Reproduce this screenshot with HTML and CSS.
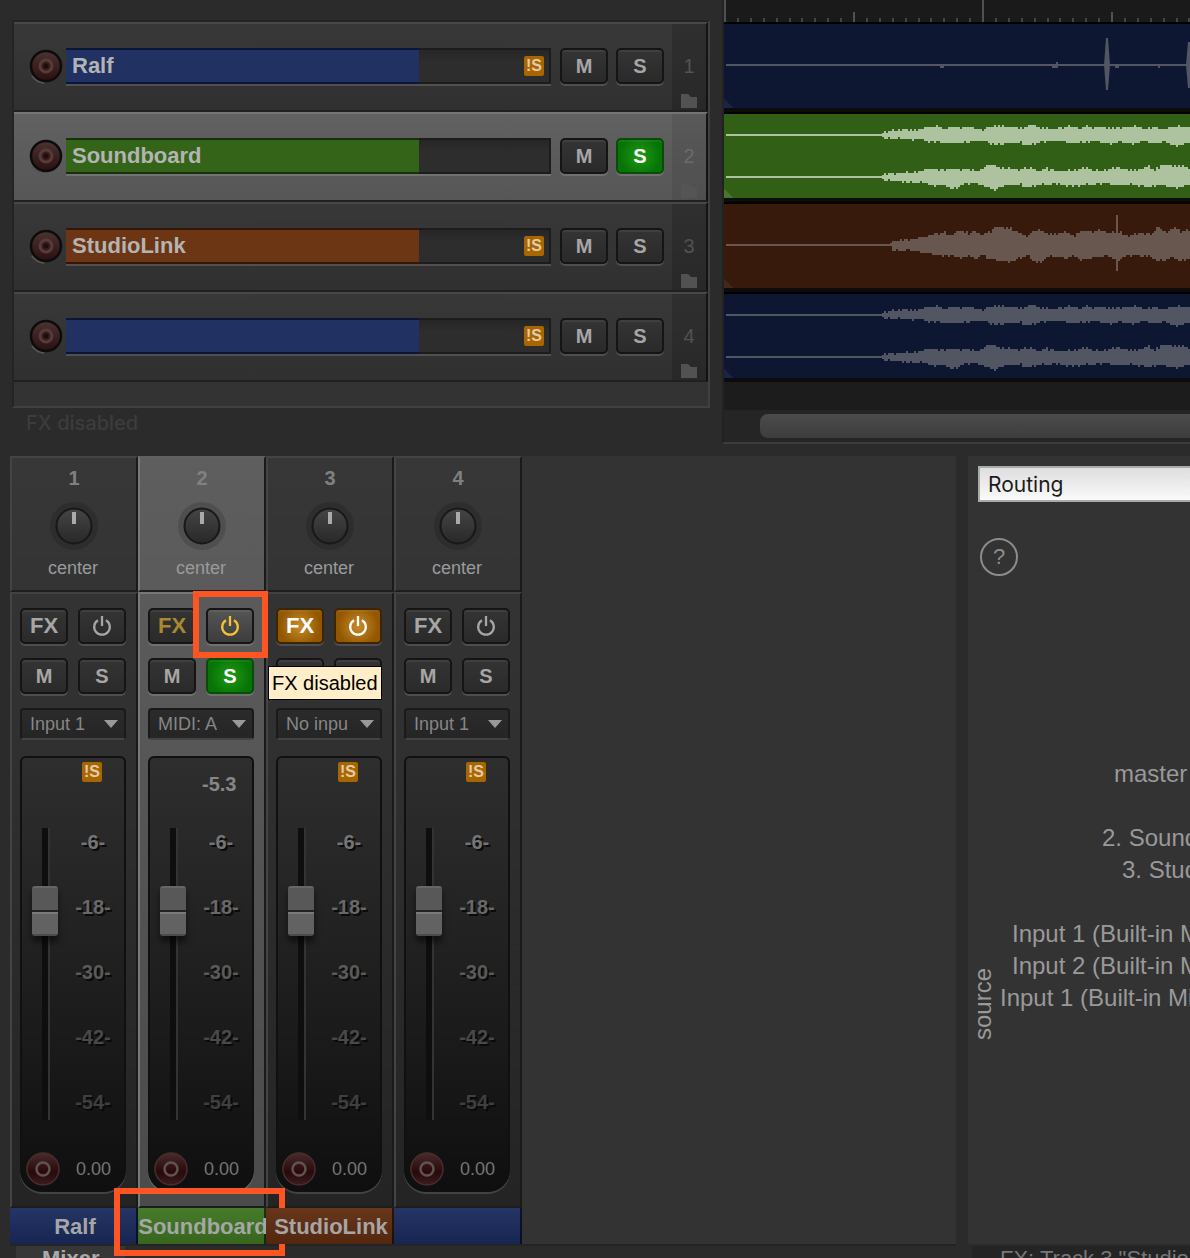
FILE: index.html
```
<!DOCTYPE html>
<html lang="en">
<head>
<meta charset="utf-8">
<title>Mixer</title>
<link rel="stylesheet" href="styles.css">
</head>
<body>
<svg class="defs" aria-hidden="true">
  <defs>
    <linearGradient id="rec-red" x1="0" y1="0" x2="0" y2="1"><stop offset="0" stop-color="#4d3232"/><stop offset="1" stop-color="#2c1010"/></linearGradient>
    <linearGradient id="rec-deep" x1="0" y1="0" x2="0" y2="1"><stop offset="0" stop-color="#4a2a2a"/><stop offset="0.6" stop-color="#280a0c"/><stop offset="1" stop-color="#3c1c1e"/></linearGradient>
    <linearGradient id="knob-face" x1="0" y1="0" x2="0" y2="1"><stop offset="0" stop-color="#454545"/><stop offset="1" stop-color="#282828"/></linearGradient>
  </defs>
  <symbol id="arm" viewBox="0 0 36 36">
    <path d="M4 28a17 17 0 0 0 12 7" fill="none" stroke="#555" stroke-width="2"/>
    <circle cx="18" cy="18" r="15" fill="url(#rec-red)" stroke="#0c0c0c" stroke-width="2.5"/>
    <circle cx="18" cy="18" r="6" fill="#3a1c1c" stroke="#553c3c" stroke-width="3"/>
    <circle cx="18" cy="18" r="2.5" fill="#200c0c"/>
  </symbol>
  <symbol id="arm-strip" viewBox="0 0 34 34">
    <circle cx="17" cy="17" r="16" fill="url(#rec-deep)" stroke="#4a2c2c" stroke-width="1.5"/>
    <circle cx="17" cy="17" r="6.5" fill="none" stroke="#645050" stroke-width="2.5"/>
  </symbol>
  <symbol id="knob" viewBox="0 0 48 48">
    <circle cx="24" cy="24" r="24" fill="#000" opacity=".14"/>
    <circle cx="24" cy="24" r="17.5" fill="url(#knob-face)" stroke="#181818" stroke-width="2"/>
    <path d="M22 10h4v12h-4z" fill="#aaa"/>
  </symbol>
  <symbol id="power" viewBox="0 0 20 20">
    <path d="M6 4.2A7.8 7.8 0 1 0 14 4.2M10 0v10" fill="none" stroke="currentColor" stroke-width="2.3"/>
  </symbol>
  <symbol id="folder" viewBox="0 0 16 14"><path d="M0 0h7l3 3h6v11H0z" fill="currentColor"/></symbol>
</svg>

<div class="app">
  <div class="upper">
    <section class="left" aria-label="Tracks">
      <div class="tracks">
        <div class="track blue">
          <button class="arm" aria-label="Record arm"><svg><use href="#arm"/></svg></button>
          <div class="field"><input class="name" type="text" value="Ralf" aria-label="Track 1 name"><div class="rest"><span class="badge">!S</span></div></div>
          <button class="btn">M</button><button class="btn">S</button>
          <div class="index"><span>1</span><svg><use href="#folder"/></svg></div>
        </div>
        <div class="track green selected">
          <button class="arm" aria-label="Record arm"><svg><use href="#arm"/></svg></button>
          <div class="field"><input class="name" type="text" value="Soundboard" aria-label="Track 2 name"><div class="rest"></div></div>
          <button class="btn">M</button><button class="btn solo">S</button>
          <div class="index"><span>2</span><svg><use href="#folder"/></svg></div>
        </div>
        <div class="track brown">
          <button class="arm" aria-label="Record arm"><svg><use href="#arm"/></svg></button>
          <div class="field"><input class="name" type="text" value="StudioLink" aria-label="Track 3 name"><div class="rest"><span class="badge">!S</span></div></div>
          <button class="btn">M</button><button class="btn">S</button>
          <div class="index"><span>3</span><svg><use href="#folder"/></svg></div>
        </div>
        <div class="track blue">
          <button class="arm" aria-label="Record arm"><svg><use href="#arm"/></svg></button>
          <div class="field"><input class="name" type="text" value="" aria-label="Track 4 name"><div class="rest"><span class="badge">!S</span></div></div>
          <button class="btn">M</button><button class="btn">S</button>
          <div class="index"><span>4</span><svg><use href="#folder"/></svg></div>
        </div>
        <div class="tail"></div>
      </div>
      <p class="status">FX disabled</p>
    </section>

    <section class="arrange" aria-label="Arrangement">
      <svg class="ruler" id="ruler"></svg>
      <div class="item blue"><svg class="wave" data-wave="voice"></svg></div>
      <div class="item green"><svg class="wave" data-wave="stereo"></svg></div>
      <div class="item brown"><svg class="wave" data-wave="mono"></svg></div>
      <div class="item blue"><svg class="wave" data-wave="stereo"></svg></div>
      <div class="blank"></div>
      <div class="scroll"><div class="scroll-thumb"></div></div>
    </section>
  </div>

  <div class="lower">
    <section class="mixer" aria-label="Mixer">
      <div class="strip blue">
        <div class="head"><span class="num">1</span><svg class="knob"><use href="#knob"/></svg><span class="pan">center</span></div>
        <div class="body">
          <div class="pair"><button class="btn fx">FX</button><button class="btn" aria-label="FX power"><svg class="power"><use href="#power"/></svg></button></div>
          <div class="pair"><button class="btn">M</button><button class="btn">S</button></div>
          <label class="input"><select aria-label="Input"><option>Input 1</option></select></label>
          <div class="fader">
            <div class="peak"><span class="badge">!S</span></div>
            <div class="level"><input type="range" value="76" aria-label="Volume"><div class="scale"><span>-6-</span><span>-18-</span><span>-30-</span><span>-42-</span><span>-54-</span></div></div>
            <div class="foot"><button class="arm" aria-label="Record arm"><svg><use href="#arm-strip"/></svg></button><span>0.00</span></div>
          </div>
        </div>
        <div class="label">Ralf</div>
      </div>

      <div class="strip green selected">
        <div class="head"><span class="num">2</span><svg class="knob"><use href="#knob"/></svg><span class="pan">center</span></div>
        <div class="body">
          <div class="pair"><button class="btn fx dim">FX</button><span class="marked"><button class="btn lit" aria-label="FX power"><svg class="power"><use href="#power"/></svg></button><span class="marker power-marker"></span></span></div>
          <div class="pair"><button class="btn">M</button><button class="btn solo">S</button></div>
          <label class="input"><select aria-label="Input"><option>MIDI: A</option></select></label>
          <div class="fader">
            <div class="peak"><span class="reading">-5.3</span></div>
            <div class="level"><input type="range" value="76" aria-label="Volume"><div class="scale"><span>-6-</span><span>-18-</span><span>-30-</span><span>-42-</span><span>-54-</span></div></div>
            <div class="foot"><button class="arm" aria-label="Record arm"><svg><use href="#arm-strip"/></svg></button><span>0.00</span></div>
          </div>
        </div>
        <div class="label">Soundboard<span class="marker label-marker"></span></div>
      </div>

      <div class="strip brown">
        <div class="head"><span class="num">3</span><svg class="knob"><use href="#knob"/></svg><span class="pan">center</span></div>
        <div class="body">
          <div class="pair"><button class="btn fx on">FX</button><button class="btn on" aria-label="FX power"><svg class="power"><use href="#power"/></svg></button></div>
          <div class="pair"><button class="btn" aria-label="Mute"></button><button class="btn" aria-label="Solo"></button><span class="tooltip" role="tooltip">FX disabled</span></div>
          <label class="input"><select aria-label="Input"><option>No inpu</option></select></label>
          <div class="fader">
            <div class="peak"><span class="badge">!S</span></div>
            <div class="level"><input type="range" value="76" aria-label="Volume"><div class="scale"><span>-6-</span><span>-18-</span><span>-30-</span><span>-42-</span><span>-54-</span></div></div>
            <div class="foot"><button class="arm" aria-label="Record arm"><svg><use href="#arm-strip"/></svg></button><span>0.00</span></div>
          </div>
        </div>
        <div class="label">StudioLink</div>
      </div>

      <div class="strip blue">
        <div class="head"><span class="num">4</span><svg class="knob"><use href="#knob"/></svg><span class="pan">center</span></div>
        <div class="body">
          <div class="pair"><button class="btn fx">FX</button><button class="btn" aria-label="FX power"><svg class="power"><use href="#power"/></svg></button></div>
          <div class="pair"><button class="btn">M</button><button class="btn">S</button></div>
          <label class="input"><select aria-label="Input"><option>Input 1</option></select></label>
          <div class="fader">
            <div class="peak"><span class="badge">!S</span></div>
            <div class="level"><input type="range" value="76" aria-label="Volume"><div class="scale"><span>-6-</span><span>-18-</span><span>-30-</span><span>-42-</span><span>-54-</span></div></div>
            <div class="foot"><button class="arm" aria-label="Record arm"><svg><use href="#arm-strip"/></svg></button><span>0.00</span></div>
          </div>
        </div>
        <div class="label"></div>
      </div>
    </section>

    <section class="routing" aria-label="Routing">
      <select class="view" aria-label="View"><option>Routing</option></select>
      <button class="help" aria-label="Help">?</button>
      <div class="matrix">
        <div class="axis">source</div>
        <ul class="sources">
          <li class="in-4">master</li>
          <li class="gap in-3">2. Sound</li>
          <li class="in-5">3. Stud</li>
          <li class="gap in-2">Input 1 (Built-in M</li>
          <li class="in-2">Input 2 (Built-in M</li>
          <li class="in-1">Input 1 (Built-in Mi</li>
        </ul>
      </div>
    </section>
  </div>

  <nav class="tabs" aria-label="Docker tabs">
    <div class="tabset"><a class="tab current" href="#mixer">Mixer</a><a class="tab" href="#meter">Performance</a></div>
    <div class="tabset end"><a class="tab" href="#fx">FX: Track 3 "Studio</a></div>
  </nav>
</div>
<script src="script.js"></script>
</body>
</html>
```

FILE: styles.css
```
* { box-sizing: border-box; }

body {
  margin: 0;
  height: 100vh;
  overflow: hidden;
  background: #2b2b2b;
  font-family: "Liberation Sans", Arial, sans-serif;
  font-size: 18px;
  color: #999;
}

button, input, select { font: inherit; color: inherit; margin: 0; }
button { padding: 0; border: 0; background: none; }
.defs { position: absolute; width: 0; height: 0; }

.blue { --name: #203162; --label: #1a2a5c; --item: #0d1732; --wave: #525663; --fade: #1a2448; --edge: #0b1538; }
.green { --name: #346418; --label: #3d7420; --item: #305f15; --wave: #adc29e; --fade: #47742e; --edge: #17320a; }
.brown { --name: #6c3614; --label: #5e2c10; --item: #371a0b; --wave: #67574e; --fade: #42281a; --edge: #351503; }

/* Shared controls */
.btn {
  width: 48px;
  height: 36px;
  border: 2px solid #151515;
  border-radius: 5px;
  background: linear-gradient(#343434, #2a2a2a);
  box-shadow: 0 2px 0 rgba(255, 255, 255, .14), inset 0 2px 0 rgba(255, 255, 255, .06);
  color: #a6a6a6;
  font-size: 20px;
  font-weight: bold;
  line-height: 32px;
  text-align: center;
}
.btn.fx { font-size: 22px; }
.btn.solo { background: radial-gradient(circle, #229a16, #067406 75%); border-color: #0c4a0a; color: #fff; }
.btn.on { background: radial-gradient(circle, #c98c2a, #925700 75%); border-color: #3c2602; color: #fff; }
.btn.dim { color: #a88930; }
.btn.lit { background: linear-gradient(#555, #3d3d3d); color: #f5c233; }
.power { display: block; width: 20px; height: 20px; margin: 0 auto; }

.badge {
  width: 20px;
  height: 20px;
  border-radius: 2px;
  background: #a96600;
  color: #e0ccaa;
  font-size: 16px;
  font-weight: bold;
  line-height: 20px;
  text-align: center;
}

/* Track list and arrangement */
.upper { display: grid; grid-template-columns: 710fr 480fr; }
.left { padding: 20px 0 0 12px; }
.tracks {
  border: 2px solid #242424;
  border-right-color: #404040;
  border-bottom-color: #404040;
  background: #333;
}
.track {
  display: flex;
  align-items: center;
  height: 90px;
  padding: 0 0 2px 14px;
  border-top: 2px solid #484848;
  border-bottom: 2px solid #202020;
  border-right: 2px solid #131313;
  background: linear-gradient(#383838, #303030);
}
.track.selected { border-top-color: #747474; background: linear-gradient(#616161, #565656); }
.track .arm { width: 38px; height: 36px; }
.track .arm svg { display: block; width: 36px; height: 36px; }
.field {
  display: flex;
  flex: 1;
  height: 36px;
  margin-right: 9px;
  background: linear-gradient(#262626, #2d2d2d 12px);
  border: solid #1c1c1c;
  border-width: 2px 2px 2px 0;
  box-shadow: 0 2px 0 rgba(255, 255, 255, .15);
}
.name {
  flex: 353;
  min-width: 0;
  padding: 0 6px;
  border: 0;
  background: var(--name);
  box-shadow: 0 -2px 0 var(--edge), 0 2px 0 var(--edge);
  color: #b4b4b4;
  font-size: 22px;
  font-weight: bold;
}
.rest { display: flex; flex: 130; align-items: center; justify-content: flex-end; padding-right: 5px; }
.track .btn { margin-right: 8px; }
.index {
  display: flex;
  flex-direction: column;
  align-items: center;
  justify-content: space-between;
  align-self: flex-start;
  width: 34px;
  height: 86px;
  padding: 30px 0 2px;
  background: rgba(0, 0, 0, .15);
  color: #525252;
  font-size: 20px;
  line-height: 24px;
}
.selected .index { background: rgba(0, 0, 0, .08); color: #6b6b6b; }
.index svg { width: 16px; height: 14px; }
.selected .index svg { color: #555; }
.tail { height: 24px; }
.status { margin: 0; padding: 2px 14px 0; color: #3c3c3c; font: 500 20px/26px Inter, sans-serif; }

.arrange {
  margin-left: 12px;
  border-left: 2px solid #222;
  border-bottom: 2px solid #3d3d3d;
  background: #1c1c1c;
  overflow: hidden;
}
.ruler { display: block; width: 100%; height: 22px; background: #1a1a1a; }
.item { height: 90px; border-top: 2px solid #000; border-bottom: 4px solid #0c0c0c; background: linear-gradient(45deg, var(--fade) 7px, transparent 7px), var(--item); }
.wave { display: block; width: 100%; height: 84px; fill: var(--wave); }
.blank { height: 28px; }
.scroll { height: 32px; padding: 4px 0 4px 36px; background: #252525; }
.scroll-thumb { height: 24px; border-radius: 8px 0 0 8px; background: linear-gradient(#4b4b4b, #3d3d3d); }

/* Mixer */
.lower { display: grid; grid-template-columns: 946fr 222fr; column-gap: 12px; padding: 12px 0 0 10px; }
.mixer { display: flex; background: #333; border-bottom: 2px solid #242424; }
.strip {
  position: relative;
  width: 128px;
  background: linear-gradient(#373737, #232323);
}
.strip.selected { background: linear-gradient(#5e5e5e, #4a4a4a); }
.head, .body { border-left: 2px solid #444; border-right: 2px solid #1a1a1a; }
.selected .head, .selected .body { border-left-color: #7a7a7a; }
.head {
  display: flex;
  flex-direction: column;
  align-items: center;
  height: 136px;
  padding-top: 8px;
  border-top: 2px solid #444;
  border-bottom: 2px solid #1e1e1e;
  line-height: 24px;
}
.selected .head { border-top-color: #606060; }
.num { color: #808080; font-size: 20px; font-weight: bold; }
.knob { width: 48px; height: 48px; margin: 12px 0 6px; }
.pan { padding-right: 2px; color: #9a9a9a; }
.body { padding: 14px 10px 14px 8px; border-top: 2px solid #414141; border-bottom: 2px solid #1c1c1c; }
.selected .body { border-top-color: #777; }
.pair { display: flex; gap: 10px; margin-bottom: 14px; }
.pair .btn { flex: none; }
.marked { position: relative; display: flex; }
.marker { position: absolute; z-index: 3; border: 6px solid #ff5522; }
.power-marker { left: -13px; top: -17px; width: 75px; height: 67px; }
.label-marker { left: -24px; top: -20px; width: 171px; height: 68px; }
.tooltip {
  position: absolute;
  left: 2px;
  top: 210px;
  z-index: 2;
  padding: 0 3px;
  border: 1px solid #000;
  background: #ffeec8;
  color: #000;
  font-size: 20px;
  line-height: 32px;
  white-space: nowrap;
}
.input { position: relative; display: block; }
.input select {
  display: block;
  width: 106px;
  height: 32px;
  padding: 0 30px 0 8px;
  appearance: none;
  border: 2px solid #1a1a1a;
  border-bottom-color: #444;
  border-radius: 4px;
  background: linear-gradient(#2b2b2b, #252525);
  color: #868686;
}
.input::after {
  content: "";
  position: absolute;
  right: 8px;
  top: 12px;
  border: 7px solid transparent;
  border-top: 8px solid #999;
  border-bottom: 0;
  pointer-events: none;
}
.fader {
  height: 436px;
  margin-top: 16px;
  border: 2px solid #101010;
  border-radius: 6px 6px 22px 22px;
  background: linear-gradient(#2e2e2e, #1c1c1c 60%, #0f0f0f);
  box-shadow: 0 2px 0 rgba(255, 255, 255, .14);
}
.peak { display: flex; height: 70px; padding: 4px 0 0 60px; }
.reading { margin: 10px 0 0 -8px; color: #868686; font-size: 20px; font-weight: bold; line-height: 24px; }
.level { display: flex; height: 292px; }
.level input {
  width: 26px;
  height: 292px;
  margin: 0 10px;
  appearance: none;
  background: linear-gradient(to right, transparent 10px, #0e0e0e 10px, #0e0e0e 16px, #333 16px, #333 18px, transparent 18px);
  writing-mode: vertical-lr;
  direction: rtl;
}
.level input::-webkit-slider-runnable-track { width: 26px; }
.level input::-webkit-slider-thumb {
  appearance: none;
  width: 26px;
  height: 50px;
  border-radius: 3px;
  background: linear-gradient(#666 0 2px, #585858 2px 24px, #222 24px 26px, #7a7a7a 26px 28px, #626262 28px 48px, #4b4b4b 48px);
  box-shadow: 0 6px 6px rgba(0, 0, 0, .5);
}
.scale {
  display: flex;
  flex: 1;
  flex-direction: column;
  gap: 37px;
  padding-right: 6px;
  font-size: 20px;
  font-weight: bold;
  line-height: 28px;
  text-align: center;
  text-shadow: 2px 2px 0 #0a0a0a;
  color: #5a5a5a;
}
.scale span:nth-child(1) { color: #757575; }
.scale span:nth-child(2) { color: #686868; }
.scale span:nth-child(4) { color: #494949; }
.scale span:nth-child(5) { color: #3f3f3f; }
.foot { display: flex; align-items: center; gap: 16px; padding: 32px 0 0 4px; color: #757575; }
.foot .arm, .foot svg { display: block; width: 34px; height: 34px; }
.label {
  position: relative;
  z-index: 1;
  display: flex;
  justify-content: center;
  height: 36px;
  padding-left: 4px;
  border-right: 2px solid rgba(0, 0, 0, .6);
  background: linear-gradient(rgba(255, 255, 255, .05), rgba(0, 0, 0, .12)), var(--label);
  color: #a6a6a6;
  font-size: 22px;
  font-weight: bold;
  line-height: 38px;
}

/* Routing */
.routing { padding: 10px 0 0 10px; background: #333; border-bottom: 2px solid #2b2b2b; overflow: hidden; }
.view {
  display: block;
  width: 100%;
  height: 36px;
  padding: 0 8px;
  appearance: none;
  border: 2px solid #aaa;
  border-right: 0;
  border-radius: 0;
  background: linear-gradient(#dedede, #fafafa);
  color: #1c1c1c;
  font: 21px Inter, sans-serif;
}
.help {
  display: block;
  width: 38px;
  height: 38px;
  margin: 36px 2px 0;
  border: 2px solid #8c8c8c;
  border-radius: 50%;
  color: #8c8c8c;
  font-size: 22px;
  line-height: 30px;
}
.matrix { display: flex; align-items: flex-start; margin-top: 182px; font-size: 24px; line-height: 32px; }
.axis {
  width: 22px;
  height: 74px;
  margin: 208px 6px 0 -6px;
  writing-mode: vertical-rl;
  transform: rotate(180deg);
  line-height: 22px;
  white-space: nowrap;
}
.sources { flex: 1; min-width: 0; margin: 0; padding: 0; list-style: none; white-space: nowrap; }
.gap { margin-top: 32px; }
.in-2 { padding-left: 12px; }
.in-3 { padding-left: 102px; }
.in-4 { padding-left: 114px; }
.in-5 { padding-left: 122px; }

/* Docker tabs */
.tabs { display: grid; grid-template-columns: 952fr 218fr; column-gap: 4px; padding-left: 16px; font-size: 22px; line-height: 26px; }
.tabset { display: flex; gap: 2px; }
.tab { padding: 0 26px; background: #373737; color: #777; text-decoration: none; white-space: nowrap; }
.tab + .tab { padding: 8px 0; background: none; font-size: 20px; }
.current { color: #aaa; font-weight: bold; }
.end { background: #242424; overflow: hidden; }
.end .tab { padding: 0 28px; background: none; }
```

FILE: script.js
```
const NS = "http://www.w3.org/2000/svg";

function add(svg, name, attrs) {
  const el = document.createElementNS(NS, name);
  for (const key in attrs) el.setAttribute(key, attrs[key]);
  svg.appendChild(el);
}

// Envelopes: [x, height above centre, depth below centre]
const UPPER = [[158,2,2],[160,3,3],[176,5,4],[192,5,4],[198,6,5],[202,8,7],[214,8,6],[218,6,8],[229,8,8],[236,7,7],[242,8,8],[250,6,6],[258,5,5],[265,8,9],[276,9,9],[284,8,8],[292,8,7],[298,6,8],[306,10,10],[314,8,7],[320,6,6],[328,6,6],[340,8,6],[351,8,9],[356,6,7],[361,10,8],[366,7,6],[376,8,7],[386,7,8],[396,7,6],[402,8,8],[414,8,8],[420,6,6],[428,8,8],[440,6,7],[452,9,11],[460,8,8],[466,8,7],[1400,8,7]];
const LOWER = [[158,2,2],[160,3,3],[178,4,5],[192,5,5],[200,7,6],[208,8,8],[216,7,8],[228,8,12],[234,7,9],[240,8,7],[250,6,6],[258,8,7],[263,12,11],[270,12,13],[276,8,9],[287,9,8],[294,7,7],[306,9,10],[314,6,7],[322,8,8],[330,6,6],[340,6,8],[352,7,9],[361,10,7],[366,6,8],[380,7,6],[394,9,8],[404,7,7],[414,7,9],[424,11,10],[430,7,8],[437,12,8],[446,11,10],[458,11,10],[466,8,7],[1400,8,7]];
const MONO = [[166,1,1],[168,4,5],[184,5,5],[200,8,8],[210,11,10],[220,12,10],[226,10,11],[236,15,13],[244,11,10],[250,14,14],[256,10,10],[264,12,13],[272,18,16],[284,17,17],[292,13,14],[302,9,10],[310,14,16],[316,15,18],[322,11,12],[332,10,11],[340,13,14],[350,9,10],[356,14,15],[366,13,13],[374,15,11],[384,12,11],[390,13,14],[392,29,27],[394,13,14],[404,9,11],[416,12,10],[426,11,12],[434,18,16],[440,12,15],[449,18,12],[456,13,16],[462,14,13],[466,14,13],[1400,13,12]];

function envelope(svg, points, centre, end) {
  const noise = [0, .8, -.7, .4, -.2, 1, -.9, .3, .6, -.5, .1];
  let top = "", bottom = "", step = 0, p = 0;
  for (let x = points[0][0]; x < end; x += 2, step++) {
    while (p < points.length - 2 && points[p + 1][0] <= x) p++;
    const a = points[p], b = points[p + 1];
    const t = (x - a[0]) / (b[0] - a[0]);
    const up = Math.round((a[1] + (b[1] - a[1]) * t + noise[step % 11]) / 2) * 2;
    const down = Math.round((a[2] + (b[2] - a[2]) * t + noise[(step * 3 + 4) % 11]) / 2) * 2;
    top += `L${x} ${centre - up}h2`;
    bottom = `L${x + 2} ${centre + down}h-2` + bottom;
  }
  add(svg, "path", { d: `M${points[0][0]} ${centre}${top}${bottom}z` });
  line(svg, centre, end);
}

function line(svg, centre, end) {
  add(svg, "rect", { x: 2, y: centre - 1, width: end, height: 2 });
}

for (const svg of document.querySelectorAll(".wave")) {
  const end = svg.clientWidth;
  if (svg.dataset.wave === "stereo") {
    envelope(svg, UPPER, 21, end);
    envelope(svg, LOWER, 63, end);
  } else if (svg.dataset.wave === "mono") {
    envelope(svg, MONO, 41, end);
  } else {
    line(svg, 41, end);
    add(svg, "path", { d: "M216 40h4v4h-4zM328 40h4v-2h2v6h-6zM391 40h4v4h-4zM434 40h2v4h-2z" });
    add(svg, "path", { d: "M380 41L382 14h2L386 41L384 66h-2zM462 41L464 18h2L468 41L466 64h-2z" });
  }
}

const ruler = document.getElementById("ruler");
for (let i = 0; i * 12.9 < ruler.clientWidth; i++) {
  const height = i % 20 === 0 ? 22 : i % 10 === 0 ? 10 : 4;
  add(ruler, "rect", { x: Math.round(i * 12.9), y: 22 - height, width: 2, height, fill: i % 10 ? "#444" : "#505050" });
}
```
